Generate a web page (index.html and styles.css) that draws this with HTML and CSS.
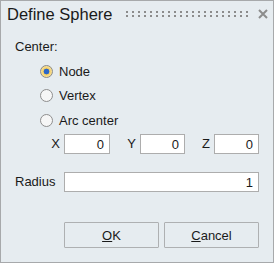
FILE: index.html
```html
<!DOCTYPE html>
<html lang="en">
<head>
  <meta charset="UTF-8" />
  <title>Define Sphere</title>
  <link rel="stylesheet" href="styles.css">
</head>
<body>

  <div class="dialog">
    <div class="titlebar">
      <span class="title">Define Sphere</span>
      <span class="grip"></span>
      <svg class="close" width="10" height="10" viewBox="0 0 10 10">
        <path d="M1 1L9 9M9 1L1 9" stroke="#8c8c8c" stroke-width="2" fill="none"/>
      </svg>
    </div>

    <div class="content">
      <div class="label">Center:</div>

      <div class="radios">
        <div class="radio"><span class="circle checked"></span>Node</div>
        <div class="radio"><span class="circle"></span>Vertex</div>
        <div class="radio"><span class="circle"></span>Arc center</div>
      </div>

      <div class="coords">
        <span class="axis">X</span>
        <input class="field" value="0" />
        <span class="axis">Y</span>
        <input class="field" value="0" />
        <span class="axis">Z</span>
        <input class="field" value="0" />

        <span class="label radius-label">Radius</span>
        <input class="field radius" value="1" />
      </div>
    </div>

    <div class="buttons">
      <button class="btn"><u>O</u>K</button>
      <button class="btn"><u>C</u>ancel</button>
    </div>
  </div>

</body>
</html>
```

FILE: styles.css
```css
body {
  margin: 0;
  font-family: "Liberation Sans", Arial, sans-serif;
}
.dialog {
  width: 274px;
  height: 263px;
  box-sizing: border-box;
  border: 1px solid #a7a9ab;
  background: #e6ecf0;
  color: #1a1a1a;
  display: flex;
  flex-direction: column;
}
.titlebar {
  display: flex;
  align-items: center;
  height: 26px;
  padding: 0 5px 0 6px;
}
.title {
  font-size: 16.5px;
}
.grip {
  width: 122px;
  height: 6px;
  margin-left: auto;
  background: conic-gradient(at 2px 2px, transparent 75%, #8c8c8c 0) 0 0 / 6px 4px;
}
.close {
  margin-left: 10px;
}
.content {
  padding: 12px 14px 0 14px;
  font-size: 13px;
}
.label {
  line-height: 16px;
}
.radios {
  margin-top: 4px;
  padding-left: 25px;
}
.radio {
  display: flex;
  align-items: center;
  height: 24.5px;
}
.circle {
  width: 13px;
  height: 13px;
  box-sizing: border-box;
  border: 1px solid #8e8e8e;
  border-radius: 50%;
  background: #f6f6f6;
  margin-right: 6px;
}
.circle.checked {
  border-color: #8a8a8a;
  background: radial-gradient(circle, #2a66c8 0 2.6px, #f4cf66 3.2px, #f8e09a 5.5px);
}
.coords {
  display: grid;
  grid-template-columns: 49px 46px 30px 45px 29px 45px;
  grid-auto-rows: 20px;
  row-gap: 18px;
  margin-top: 1.5px;
  align-items: center;
}
.axis {
  justify-self: end;
  padding-right: 4px;
  line-height: 16px;
}
.field {
  height: 20px;
  width: 100%;
  box-sizing: border-box;
  border: 1px solid #adadad;
  background: #fff;
  font-family: "Liberation Sans", Arial, sans-serif;
  font-size: 13px;
  color: #1a1a1a;
  text-align: right;
  padding: 0 5px;
  margin: 0;
}
.radius {
  grid-column: 2 / 7;
}
.buttons {
  margin-top: auto;
  display: flex;
  justify-content: flex-end;
  gap: 5px;
  padding: 0 14px 14px 0;
}
.btn {
  width: 95px;
  height: 26px;
  border: 1px solid #aeb0b2;
  border-radius: 1px;
  background: #e6ecf0;
  font-family: "Liberation Sans", Arial, sans-serif;
  font-size: 13px;
  color: #1a1a1a;
  padding: 0;
}
```
